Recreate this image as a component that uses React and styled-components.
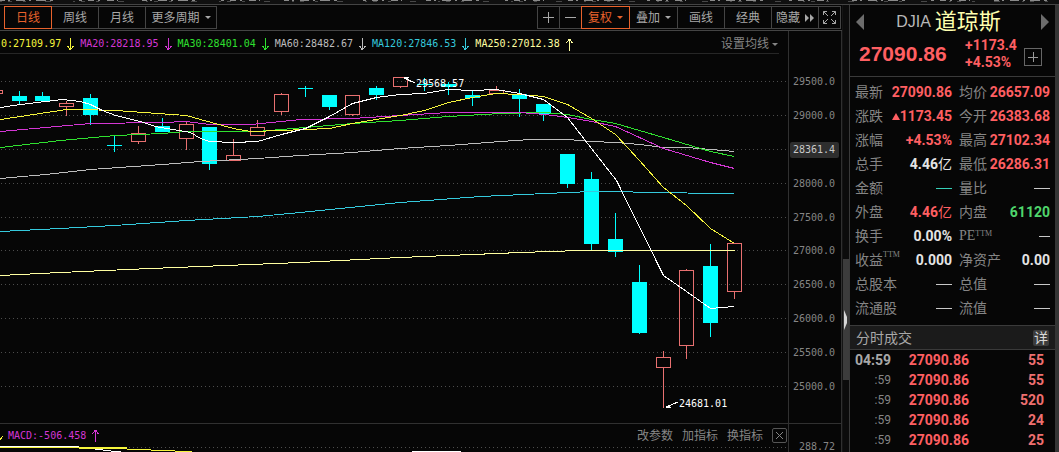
import React from "react";
import styled, { createGlobalStyle, css } from "styled-components";

const C = {
  bg: "#060606",
  line: "#3a3a3a",
  faint: "#262626",
  text: "#a8a8a8",
  dim: "#858585",
  orange: "#e8622c",
  red: "#ff5f62",
  candle: "#e87070",
  cyan: "#00ffff",
  green: "#4fd66c",
  white: "#e4e4e4",
};
const CJK = `"Liberation Sans", "Noto Sans CJK SC", sans-serif`;
const MONO = `"DejaVu Sans Mono", "Noto Sans CJK SC", monospace`;
const NUM = `Roboto, "Noto Sans CJK SC", sans-serif`;

const Global = createGlobalStyle`
  * { box-sizing: border-box; }
  body { margin: 0; background: ${C.bg}; color: ${C.text}; font-family: ${CJK}; font-size: 12px; overflow: hidden; }
  button { font: inherit; color: inherit; background: none; border: 0; padding: 0; cursor: pointer; }
  svg { display: block; }
`;

const Page = styled.div`
  min-height: 100vh;
  display: flex;
  flex-direction: column;
`;
const TopEdge = styled.div`
  height: 5px;
  overflow: hidden;
  background: #101010;
  border-bottom: 1px solid #444;
`;
const Columns = styled.div`
  flex: 1;
  display: grid;
  grid-template-columns: minmax(0, 1fr) 8px 205px 4px;
`;
const Main = styled.main`
  display: flex;
  flex-direction: column;
  min-width: 0;
`;
const Toolbar = styled.div`
  height: 26px;
  display: flex;
  justify-content: space-between;
  padding: 1px 1px 2px 4px;
  border-bottom: 1px solid #444;
`;
const Group = styled.div`
  display: flex;
`;
const ToolButton = styled.button`
  && {
    width: ${(p) => p.$w}px;
    height: 23px;
    display: flex;
    align-items: center;
    justify-content: center;
    gap: 5px;
    line-height: 16px;
    border: 1px solid ${(p) => (p.$active ? C.orange : "#444")};
    color: ${(p) => (p.$active ? C.orange : C.text)};
    ${(p) => p.$active && css`position: relative; z-index: 1;`}
  }
  & + & {
    margin-left: -1px;
  }
`;
const Caret = styled.i`
  border: 3px solid transparent;
  border-top-color: currentColor;
  border-bottom: 0;
`;
const Body = styled.div`
  flex: 1;
  display: grid;
  grid-template-columns: minmax(0, 1fr) 54px;
`;
const Plot = styled.section`
  min-width: 0;
  display: flex;
  flex-direction: column;
`;
const Legend = styled.div`
  height: 23px;
  display: flex;
  align-items: center;
  margin-right: 9px;
  padding-left: 1px;
  padding-top: 4px;
  border-bottom: 1px solid ${C.faint};
  font: 10px/16px ${MONO};
  white-space: nowrap;
`;
const LegendItem = styled.span`
  display: flex;
  align-items: center;
  gap: 6px;
  padding-right: 6px;
  color: ${(p) => p.$c};
`;
const MaButton = styled.button`
  && {
    margin-left: auto;
    font: 12px/16px ${CJK};
    color: ${C.dim};
    display: flex;
    align-items: center;
    gap: 3px;
    padding-right: 1px;
  }
`;
const ChartSvg = styled.svg`
  width: 100%;
  height: auto;
  text {
    font: 10px ${MONO};
    fill: #fff;
  }
`;
const Indicator = styled.div`
  height: 29px;
  border-top: 1px solid #303030;
  overflow: hidden;
`;
const IndicatorBar = styled.div`
  height: 22px;
  display: flex;
  align-items: center;
  gap: 5px;
  padding-right: 1px;
  padding-top: 1px;
  font: 10px/16px ${MONO};
`;
const Actions = styled.div`
  margin-left: auto;
  display: flex;
  align-items: center;
  gap: 9px;
  font: 12px/16px ${CJK};
  color: ${C.dim};
`;
const CloseButton = styled.button`
  && {
    width: 15px;
    height: 15px;
    display: grid;
    place-items: center;
    border: 1px solid #555;
    border-radius: 2px;
  }
`;
const Axis = styled.aside`
  border-left: 1px solid #303030;
  border-right: 1px solid #303030;
  display: flex;
  flex-direction: column;
  font: 10px/16px ${MONO};
  color: ${C.dim};
`;
const Ticks = styled.ul`
  flex: 1;
  list-style: none;
  margin: 0;
  padding: 43px 2px 28px 1px;
  display: flex;
  flex-direction: column;
  justify-content: space-between;
`;
const Tick = styled.li`
  height: 16px;
  padding-left: 3px;
  border-radius: 2px;
  ${(p) => p.$on && css`background: #2e2e2e; color: #c8c8c8;`}
`;
const AxisFoot = styled.div`
  height: 29px;
  padding: 15px 6px 0 0;
  border-top: 1px solid #303030;
  text-align: right;
  overflow: hidden;
`;
const Scroller = styled.div`
  display: flex;
  flex-direction: column;
  background: #0c0c0c;
  border-right: 1px solid ${C.line};
  border-left: 1px solid #151515;
  padding-top: 254px;
`;
const Thumb = styled.button`
  && {
    height: 121px;
    background: #3c3c3c;
    display: flex;
    align-items: center;
  }
`;
const Side = styled.aside`
  display: flex;
  flex-direction: column;
`;
const Edge = styled.div`
  background: #353535;
`;
const Header = styled.header`
  height: 72px;
  padding: 3px 5px 0;
  border-bottom: 1px solid ${C.line};
`;
const TitleRow = styled.div`
  display: flex;
  align-items: center;
  justify-content: space-between;
  height: 28px;
`;
const Title = styled.h1`
  margin: 0;
  display: flex;
  align-items: center;
  gap: 4px;
  padding-right: 8px;
  font: 16px/28px ${CJK};
  color: #b8b8b8;
  b {
    font-size: 22px;
    font-weight: 400;
    color: #ffffae;
  }
`;
const PriceRow = styled.div`
  display: flex;
  align-items: center;
  height: 36px;
  padding: 0 8px 0 4px;
  color: ${C.red};
  font: bold 14px/17px ${NUM};
`;
const Price = styled.strong`
  flex: 1;
  font: bold 21px/28px ${CJK};
`;
const Change = styled.div`
  width: 59px;
`;
const AddButton = styled.button`
  && {
    width: 18px;
    height: 18px;
    margin-top: 6px;
    border: 1px solid #666;
    color: #999;
    display: grid;
    place-items: center;
  }
`;
const Quotes = styled.dl`
  margin: 0;
  padding: 3px 5px 5px;
  display: grid;
  grid-template-columns: 97px minmax(0, 1fr);
  column-gap: 7px;
`;
const Quote = styled.div`
  height: 24px;
  display: flex;
  justify-content: space-between;
  align-items: center;
  white-space: nowrap;
`;
const Label = styled.dt`
  font: 14px/20px ${(p) => (p.$serif ? `"Liberation Serif", serif` : CJK)};
  color: ${C.dim};
  display: flex;
  small {
    font: 8px/${(p) => (p.$serif ? 16 : 10)}px "Liberation Serif", serif;
  }
`;
const Value = styled.dd`
  margin: 0;
  display: flex;
  align-items: center;
  font: bold 14px/20px ${NUM};
  color: ${(p) => p.$c};
  span {
    font-weight: 400;
  }
`;
const Dash = styled.i`
  width: ${(p) => (p.$short ? 11 : 16)}px;
  height: 1px;
  background: currentColor;
`;
const UpMark = styled.i`
  border: 4px solid transparent;
  border-bottom: 7px solid currentColor;
  border-top: 0;
`;
const SectionHead = styled.div`
  height: 25px;
  padding: 0 6px;
  display: flex;
  align-items: center;
  justify-content: space-between;
  background: #1b1b1b;
  border-top: 1px solid ${C.line};
  border-bottom: 1px solid ${C.line};
  h2 {
    margin: 0;
    font: 14px/20px ${CJK};
  }
`;
const DetailButton = styled.button`
  && {
    width: 16px;
    height: 16px;
    border-radius: 2px;
    background: #3c3c3c;
    color: #d8d8d8;
    font: 14px/16px ${CJK};
  }
`;
const Trades = styled.table`
  width: 100%;
  border-collapse: collapse;
  font: bold 14px/20px ${NUM};
  color: ${C.red};
  td {
    padding: 0;
    height: 20px;
    text-align: right;
  }
  td:nth-child(1) {
    width: 41px;
    color: ${C.dim};
    font-weight: 400;
    font-size: 12px;
  }
  tr:first-child td:nth-child(1) {
    font: bold 14px/20px ${NUM};
    color: #a8a8a8;
  }
  td:nth-child(2) {
    width: 78px;
  }
  td:nth-child(3) {
    padding-right: 11px;
    color: #ee7070;
  }
`;

const Arrow = ({ up }) => (
  <svg width="7" height="13" viewBox="0 0 7 13" fill="none" stroke="currentColor" shapeRendering="crispEdges">
    <path d={up ? "M3.5 1V13M3.5 1L0.5 5M3.5 1L6.5 5" : "M3.5 0V12M3.5 12L0.5 8M3.5 12L6.5 8"} />
  </svg>
);

const legend = [
  ["0:27109.97", "#f5f53c"],
  ["MA20:28218.95", "#d436d4"],
  ["MA30:28401.04", "#2fe02f"],
  ["MA60:28482.67", "#bdbdbd"],
  ["MA120:27846.53", "#35c9dc"],
  ["MA250:27012.38", "#ffffa0", true],
];

// x centre, body top, body bottom, wick top, wick bottom, rising
const candles = [
  [-5, 90, 93, 90, 93, 1], [19, 96, 101, 91, 104], [42, 96, 101, 92, 101], [66, 103, 106, 101, 115, 1],
  [90, 98, 115, 94, 125], [114, 145, 146, 136, 152], [138, 133, 141, 126, 143, 1], [162, 126, 132, 118, 132],
  [186, 124, 138, 122, 149, 1], [209, 127, 164, 127, 170], [233, 155, 160, 139, 160, 1], [257, 127, 135, 120, 135, 1],
  [281, 94, 111, 93, 114, 1], [305, 88, 89, 86, 97], [329, 95, 107, 95, 110], [352, 95, 114, 95, 115, 1],
  [376, 88, 95, 86, 100], [400, 77, 86, 77, 87, 1], [424, 84, 85, 78, 91], [448, 84, 87, 82, 95],
  [472, 95, 98, 91, 106], [496, 90, 93, 86, 93, 1], [519, 94, 99, 89, 117], [543, 104, 114, 104, 121],
  [567, 154, 184, 154, 188], [591, 179, 244, 172, 250], [615, 239, 252, 213, 257], [639, 282, 333, 265, 334],
  [663, 357, 367, 351, 407, 1], [686, 270, 345, 269, 358, 1], [710, 266, 323, 244, 337], [734, 243, 291, 243, 298, 1],
];

const averages = [
  ["#ffffa0", "0,275 60,272 150,268 300,262 400,257 520,252 580,250 734,250"],
  ["#35c9dc", "0,231 60,228 114,225 186,220 257,216 300,212 400,202 480,196 545,193 591,191 625,191 639,192 734,193"],
  ["#bdbdbd", "0,178 45,174 90,169 162,164 200,161 257,158 300,155 352,152 400,148 448,145 500,141 530,139 567,139 591,141 615,142 639,144 663,147 686,147 734,151"],
  ["#2fe02f", "0,147 60,140 115,135 162,133 186,131 257,131 281,129 305,127 352,123 400,120 448,116 500,113 543,112 567,114 591,119 615,123 639,130 663,137 710,151 734,156"],
  ["#d436d4", "0,131 45,127 90,123 162,122 186,121 209,124 250,124 281,121 300,119 352,118 400,115 448,112 519,112 545,114 567,117 591,121 615,126 639,137 663,148 710,162 734,168"],
  ["#f5f53c", "0,119 66,109 80,109 115,110 186,115 200,119 233,128 250,131 281,130 305,129 329,128 352,123 376,119 400,115 424,110 448,102 472,97 496,93 519,94 543,96 567,104 591,118 615,134 639,160 663,187 686,205 710,228 734,243"],
  ["#ffffff", "0,107 20,104 45,101 62,99 80,101 90,104 102,110 115,115 140,121 155,126 190,132 200,138 209,141 233,142 257,141 281,134 305,128 329,116 352,103 376,97 400,94 424,93 448,89 472,90 496,89 519,93 543,99 567,117 591,148 616,180 663,275 686,291 710,308 734,306"],
];
const gridRows = [81, 115, 149, 183, 217, 250, 284, 318, 352, 386];
const ticks = ["29500.0", "29000.0", "28361.4", "28000.0", "27500.0", "27000.0", "26500.0", "26000.0", "25500.0", "25000.0"];

const Chart = () => (
  <ChartSvg viewBox="0 54 788 369" shapeRendering="crispEdges" role="img" aria-label="日线">
    {gridRows.map((y) => (
      <path key={y} d={`M1 ${y}.5H788`} stroke="#4c4c4c" strokeDasharray="1 3" />
    ))}
    {candles.map(([x, t, b, h, l, up]) =>
      up ? (
        <g key={x} stroke={C.candle} fill="none">
          <path d={`M${x + 0.5} ${h}V${t}M${x + 0.5} ${b + 1}V${l + 1}`} />
          <rect x={x - 6.5} y={t + 0.5} width="14" height={b - t} />
        </g>
      ) : (
        <g key={x} fill={C.cyan}>
          <rect x={x} y={h} width="1" height={l - h} />
          <rect x={x - 7} y={t} width="15" height={b - t} />
        </g>
      )
    )}
    {averages.map(([c, pts]) => (
      <polyline key={c} points={pts} stroke={c} fill="none" transform="translate(0.5 0.5)" />
    ))}
    <g stroke="#fff" fill="#fff">
      <path d="M404 78L415 83" />
      <path d="M403 77h6l-2 3z" stroke="none" />
      <path d="M666 407L678 402" />
      <path d="M665 408l4-4l2 4z" stroke="none" />
    </g>
    <text x="416" y="87">29568.57</text>
    <text x="679" y="407">24681.01</text>
  </ChartSvg>
);

const dash = (c = "#c8c8c8", short = false) => [<Dash key="d" $short={short} />, c];
const quotes = [
  ["最新", "27090.86", C.red], ["均价", "26657.09", C.red],
  ["涨跌", <><UpMark />1173.45</>, C.red], ["今开", "26383.68", C.red],
  ["涨幅", "+4.53%", C.red], ["最高", "27102.34", C.red],
  ["总手", <>4.46<span>亿</span></>, C.white], ["最低", "26286.31", C.red],
  ["金额", ...dash("#35d0b8")], ["量比", ...dash()],
  ["外盘", <>4.46<span>亿</span></>, C.red], ["内盘", "61120", C.green],
  ["换手", "0.00%", C.white], [<>PE<small>TTM</small></>, ...dash("#c8c8c8", true)],
  [<>收益<small>TTM</small></>, "0.000", C.white], ["净资产", "0.00", C.white],
  ["总股本", ...dash()], ["总值", ...dash()],
  ["流通股", ...dash()], ["流值", ...dash()],
];
const trades = [["04:59", "55"], [":59", "55"], [":59", "520"], [":59", "24"], [":59", "25"]];

export default function App() {
  return (
    <Page>
      <Global />
      <TopEdge>
        <svg width="100%" height="2">
          <path d="M0 0.5H2000" stroke="#8a8a8a" strokeDasharray="5 3 2 6 9 4 2 5 10 4 3 26 3 6 6 4 2 7 7 3 1 24" />
          <path d="M0 1.5H2000" stroke="#484848" strokeDasharray="2 6 4 11 3 19 6 22" />
        </svg>
      </TopEdge>
      <Columns>
        <Main>
          <Toolbar>
            <Group>
              <ToolButton $w={48} $active>日线</ToolButton>
              <ToolButton $w={48}>周线</ToolButton>
              <ToolButton $w={48}>月线</ToolButton>
              <ToolButton $w={72}>更多周期<Caret /></ToolButton>
            </Group>
            <Group>
              <ToolButton $w={23} aria-label="+">
                <svg width="11" height="11" stroke="currentColor"><path d="M5.5 0V11M0 5.5H11" /></svg>
              </ToolButton>
              <ToolButton $w={23} aria-label="-">
                <svg width="11" height="11" stroke="currentColor"><path d="M0 5.5H11" /></svg>
              </ToolButton>
              <ToolButton $w={49} $active>复权<Caret /></ToolButton>
              <ToolButton $w={49}>叠加<Caret /></ToolButton>
              <ToolButton $w={48}>画线</ToolButton>
              <ToolButton $w={48}>经典</ToolButton>
              <ToolButton $w={48}>
                隐藏
                <svg width="9" height="8" fill="currentColor"><path d="M0 0L4 4L0 8ZM5 0L9 4L5 8Z" /></svg>
              </ToolButton>
              <ToolButton $w={23} aria-label="全屏">
                <svg width="13" height="13" fill="none" stroke="currentColor">
                  <path d="M4 .5H.5V4M.5 .5L5 5M9 .5H12.5V4M12.5 .5L8 5M4 12.5H.5V9M.5 12.5L5 8M9 12.5H12.5V9M12.5 12.5L8 8" />
                </svg>
              </ToolButton>
            </Group>
          </Toolbar>
          <Body>
            <Plot>
              <Legend>
                {legend.map(([t, c, up]) => (
                  <LegendItem key={t} $c={c}>{t}<Arrow up={up} /></LegendItem>
                ))}
                <MaButton>设置均线<Caret /></MaButton>
              </Legend>
              <Chart />
              <Indicator>
                <IndicatorBar>
                  <svg width="3" height="13" stroke="#f5f53c" fill="none" shapeRendering="crispEdges">
                    <path d="M-1 12L3 7" />
                  </svg>
                  <LegendItem $c="#d436d4">MACD:-506.458<Arrow up /></LegendItem>
                  <Actions>
                    <button>改参数</button>
                    <button>加指标</button>
                    <button>换指标</button>
                    <CloseButton aria-label="关闭">
                      <svg width="7" height="7" stroke="currentColor"><path d="M0 0L7 7M7 0L0 7" /></svg>
                    </CloseButton>
                  </Actions>
                </IndicatorBar>
                <svg width="100%" height="6" shapeRendering="crispEdges" fill="none">
                  <path d="M1 1.5H2000" stroke="#4c4c4c" strokeDasharray="1 3" />
                  <path d="M0 .5H79M95 3.5H103M103 4.5H111M111 5.5H121M412 5.5H461" stroke="#fff" />
                  <path d="M0 1.5H127M79 2.5H127M127 3.5H151M151 4.5H175M175 5.5H192" stroke="#f5f53c" />
                </svg>
              </Indicator>
            </Plot>
            <Axis>
              <Ticks>
                {ticks.map((t, i) => <Tick key={t} $on={i === 2}>{t}</Tick>)}
              </Ticks>
              <AxisFoot>288.72</AxisFoot>
            </Axis>
          </Body>
        </Main>
        <Scroller>
          <Thumb aria-label="展开">
            <svg width="5" height="20" fill="#d8d8d8"><path d="M1 0L4 7V13L1 20Z" /></svg>
          </Thumb>
        </Scroller>
        <Side>
          <Header>
            <TitleRow>
              <button aria-label="上一个">
                <svg width="9" height="16" fill="#6c6c6c"><path d="M9 0V16L1 8Z" /></svg>
              </button>
              <Title>DJIA<b>道琼斯</b></Title>
              <button aria-label="下一个">
                <svg width="9" height="16" fill="#6c6c6c"><path d="M0 0V16L8 8Z" /></svg>
              </button>
            </TitleRow>
            <PriceRow>
              <Price>27090.86</Price>
              <Change>+1173.4<br />+4.53%</Change>
              <AddButton aria-label="+">
                <svg width="10" height="10" stroke="currentColor" shapeRendering="crispEdges"><path d="M5 0V10M0 5H10" /></svg>
              </AddButton>
            </PriceRow>
          </Header>
          <Quotes>
            {quotes.map(([l, v, c], i) => (
              <Quote key={i}>
                <Label $serif={i === 13}>{l}</Label>
                <Value $c={c}>{v}</Value>
              </Quote>
            ))}
          </Quotes>
          <SectionHead>
            <h2>分时成交</h2>
            <DetailButton>详</DetailButton>
          </SectionHead>
          <Trades>
            <tbody>
              {trades.map(([t, n], i) => (
                <tr key={i}><td>{t}</td><td>27090.86</td><td>{n}</td></tr>
              ))}
            </tbody>
          </Trades>
        </Side>
        <Edge />
      </Columns>
    </Page>
  );
}
